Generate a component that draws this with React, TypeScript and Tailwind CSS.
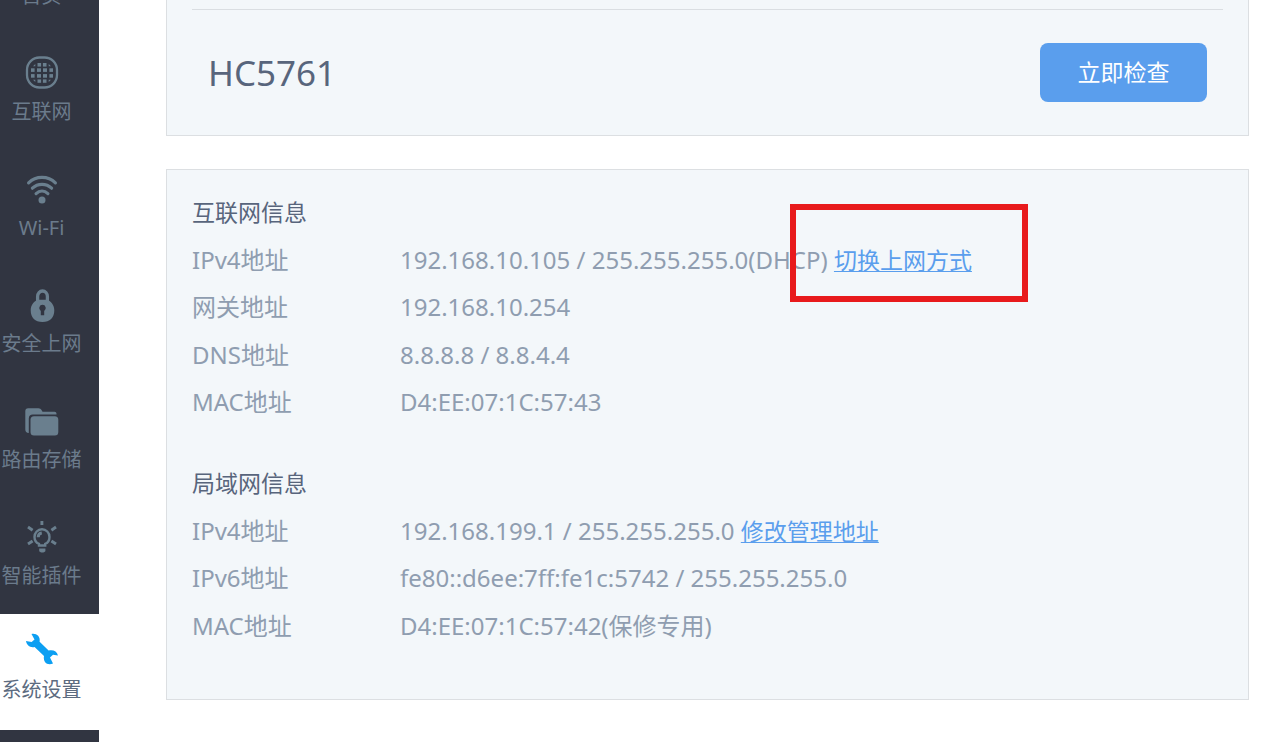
import type { ReactNode } from "react";

function GlobeIcon() {
  return (
    <svg width="34" height="34" viewBox="0 0 34 34" fill="none" aria-hidden="true">
      <rect x="2" y="1.500" width="30" height="30" rx="12.500" stroke="currentColor" strokeWidth="2.300" />
      <g fill="currentColor">
        <rect x="12.500" y="7" width="3.600" height="3.600" />
        <rect x="17.900" y="7" width="3.600" height="3.600" />
        <rect x="6" y="12.300" width="3.600" height="3.600" />
        <rect x="12" y="12.300" width="4" height="3.600" />
        <rect x="18" y="12.300" width="4" height="3.600" />
        <rect x="24.400" y="12.300" width="3.600" height="3.600" />
        <rect x="6" y="18.100" width="3.600" height="3.600" />
        <rect x="12" y="18.100" width="4" height="3.600" />
        <rect x="18" y="18.100" width="4" height="3.600" />
        <rect x="24.400" y="18.100" width="3.600" height="3.600" />
        <rect x="12.500" y="23.400" width="3.600" height="3.400" />
        <rect x="17.900" y="23.400" width="3.600" height="3.400" />
        <path d="M8 10.300 10.300 8V10.300ZM26 10.300 23.700 8V10.300ZM8 23.700 10.300 26V23.700ZM26 23.700 23.700 26V23.700Z" />
      </g>
    </svg>
  );
}

function WifiIcon() {
  return (
    <svg width="34" height="34" viewBox="0 0 34 34" fill="none" aria-hidden="true">
      <g stroke="currentColor" strokeWidth="3.200" strokeLinecap="round">
        <path d="M3.600 10.800C11 3.500 23 3.500 30.400 10.800" />
        <path d="M7.400 16.200C12.800 11 21.200 11 26.600 16.200" />
        <path d="M11.100 21.600C14.600 18.400 19.400 18.400 22.900 21.600" />
      </g>
      <circle cx="17" cy="28" r="3.500" fill="currentColor" />
    </svg>
  );
}

function LockIcon() {
  return (
    <svg width="34" height="34" viewBox="0 0 34 34" aria-hidden="true">
      <path d="M12.600 15V8.600a4.900 5.600 0 0 1 9.800 0V15" fill="none" stroke="currentColor" strokeWidth="3.300" />
      <path
        fill="currentColor"
        fillRule="evenodd"
        d="M12.500 11.800h10c3.200 1.400 6.800 5.200 6.800 10.400 0 7.600-4.400 11.800-11.800 11.800S5.700 29.800 5.700 22.200c0-5.200 3.600-9 6.800-10.400ZM17.500 16.800a3.300 3.300 0 0 0-1.700 6.100v4.300h3.400v-4.300a3.300 3.300 0 0 0-1.700-6.100Z"
      />
    </svg>
  );
}

function FolderIcon() {
  return (
    <svg width="34" height="34" viewBox="0 0 34 34" fill="currentColor" aria-hidden="true">
      <path d="M.300 7.200C.300 5.300 1.300 4.200 3.200 4.200H13.500c1.400 0 2.300.700 3 1.900l1 1.600h12c1.200 0 2 .700 2 2v.800H7.800c-2.500 0-4 1.500-4 4v14.600C1.500 29.100.300 27.600.300 25.600Z" />
      <rect x="5.500" y="12.200" width="27.800" height="19.400" rx="3.500" />
    </svg>
  );
}

function BulbIcon() {
  return (
    <svg width="34" height="34" viewBox="0 0 34 34" fill="none" aria-hidden="true">
      <path
        d="M14 23.900C11 22.500 9.500 19.700 9.500 16.900a7.500 7.600 0 0 1 15 0c0 2.800-1.400 5.600-4.300 7v1.600H14Z"
        stroke="currentColor"
        strokeWidth="2.400"
      />
      <path d="M13.200 17.200c0-2.200 1.400-3.900 3.600-4.200" stroke="currentColor" strokeWidth="3" />
      <path d="M14.200 28.500h6.200v2.800c-1.600 1.700-4.600 1.700-6.200 0Z" fill="currentColor" />
      <path
        d="M16.900 1v4M3 7l4.600 3.200M31 7l-4.600 3.200M3 24l4.600-3M31 24l-4.600-3"
        stroke="currentColor"
        strokeWidth="2.900"
      />
    </svg>
  );
}

function WrenchIcon() {
  return (
    <svg width="34" height="34" viewBox="0 0 34 34" fill="currentColor" aria-hidden="true">
      <path d="M6.500 2C11 1 15.600 4 14.600 9.800L23.600 18.600C28 17.400 32 19.200 33 23.600L28 22.700 25 25.500 28 31.500C22.500 34 17.800 30 19 24L9.600 14.900C5.500 16 1.600 13.400 1 9L6.600 10 9.500 7.500Z" />
    </svg>
  );
}

type NavItem = { label: string; icon: ReactNode; active?: boolean };

const navItems: NavItem[] = [
  { label: "首页", icon: null },
  { label: "互联网", icon: <GlobeIcon /> },
  { label: "Wi-Fi", icon: <WifiIcon /> },
  { label: "安全上网", icon: <LockIcon /> },
  { label: "路由存储", icon: <FolderIcon /> },
  { label: "智能插件", icon: <BulbIcon /> },
  { label: "系统设置", icon: <WrenchIcon />, active: true },
];

function Sidebar() {
  return (
    <nav className="w-[99px] shrink-0 overflow-hidden bg-[#313541]">
      <ul className="-mt-[82px]">
        {navItems.map((item) => (
          <li key={item.label}>
            <a
              href="#"
              className={
                item.active
                  ? "flex h-[116px] flex-col items-center gap-[10px] bg-white pt-[18px] pr-4 text-[#5c6b80]"
                  : "flex h-[116px] flex-col items-center gap-2 pt-[22px] pr-4 text-[#6b7b8c]"
              }
            >
              <span className={item.active ? "h-[34px] text-[#0c9ff2]" : "h-[34px] text-[#6a7f8e]"}>
                {item.icon}
              </span>
              <span className="text-[20px] leading-[28px] whitespace-nowrap">{item.label}</span>
            </a>
          </li>
        ))}
      </ul>
    </nav>
  );
}

type Row = { label: string; value: ReactNode };

function InfoTable({ title, rows, height }: { title: string; rows: Row[]; height: string }) {
  return (
    <section>
      <h2 className="text-[23px] leading-[48px] text-[#58657c]">{title}</h2>
      <table className={`w-full table-fixed text-left text-[24px] leading-[32px] text-[#8f9db0] ${height}`}>
        <tbody>
          {rows.map((row) => (
            <tr key={row.label}>
              <th scope="row" className="w-[208px] p-0 font-normal">
                {row.label}
              </th>
              <td className="p-0">{row.value}</td>
            </tr>
          ))}
        </tbody>
      </table>
    </section>
  );
}

function TextLink({ children }: { children: ReactNode }) {
  return (
    <a href="#" className="text-[23px] text-[#5a9eed] underline decoration-1 underline-offset-2">
      {children}
    </a>
  );
}

const wanRows: Row[] = [
  {
    label: "IPv4地址",
    value: (
      <>
        192.168.10.105 / 255.255.255.0(DHCP){" "}
        <span className="relative">
          <TextLink>切换上网方式</TextLink>
          <span className="pointer-events-none absolute -top-[39px] -right-[56px] -left-[44px] h-[98px] border-[6px] border-[#e81a1c]" />
        </span>
      </>
    ),
  },
  { label: "网关地址", value: "192.168.10.254" },
  { label: "DNS地址", value: "8.8.8.8 / 8.8.4.4" },
  { label: "MAC地址", value: "D4:EE:07:1C:57:43" },
];

const lanRows: Row[] = [
  {
    label: "IPv4地址",
    value: (
      <>
        192.168.199.1 / 255.255.255.0 <TextLink>修改管理地址</TextLink>
      </>
    ),
  },
  { label: "IPv6地址", value: "fe80::d6ee:7ff:fe1c:5742 / 255.255.255.0" },
  { label: "MAC地址", value: "D4:EE:07:1C:57:42(保修专用)" },
];

export default function App() {
  return (
    <div className="flex min-h-screen bg-white font-['Noto_Sans','Noto_Sans_CJK_SC',sans-serif]">
      <Sidebar />
      <main className="flex min-w-0 flex-1 flex-col gap-[33px] pr-3 pl-[67px]">
        <section className="border border-t-0 border-[#dcdfe2] bg-[#f3f7fa] px-[25px] pt-[9px]">
          <div className="flex h-[126px] items-center justify-between border-t border-[#dadee2] px-4">
            <h1 className="text-[35px] leading-[48px] text-[#58657c]">HC5761</h1>
            <button type="button" className="h-[59px] w-[167px] rounded-lg bg-[#5a9eed] text-[23px] text-white">
              立即检查
            </button>
          </div>
        </section>
        <section className="flex flex-col gap-[33px] border border-[#dcdfe2] bg-[#f3f7fa] px-[25px] pt-[18px] pb-[49px]">
          <InfoTable title="互联网信息" rows={wanRows} height="h-[190px]" />
          <InfoTable title="局域网信息" rows={lanRows} height="h-[143px]" />
        </section>
      </main>
    </div>
  );
}
